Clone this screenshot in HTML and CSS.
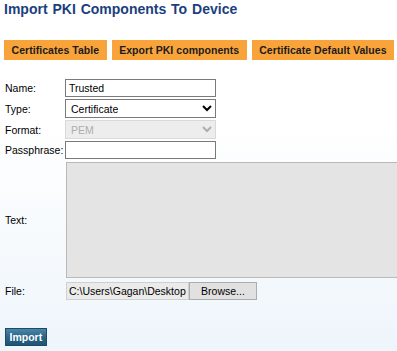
FILE: index.html
```html
<!DOCTYPE html>
<html lang="en">
<head>
    <meta charset="UTF-8">
    <title>Import PKI Components To Device</title>
    <link rel="stylesheet" href="styles.css">
</head>
<body>
    <div id="page">
        <h1 class="title">Import PKI Components To Device</h1>

        <div class="tabs">
            <a href="#" class="tab">Certificates Table</a>
            <a href="#" class="tab">Export PKI components</a>
            <a href="#" class="tab">Certificate Default Values</a>
        </div>

        <form class="pki-form">
            <label for="name">Name:</label>
            <input type="text" id="name" class="field" value="Trusted">

            <label for="type">Type:</label>
            <select id="type" class="field">
                <option>Certificate</option>
            </select>

            <label for="format">Format:</label>
            <select id="format" class="field" disabled>
                <option>PEM</option>
            </select>

            <label for="pass">Passphrase:</label>
            <input type="text" id="pass" class="field">

            <label for="text">Text:</label>
            <textarea id="text" class="text-area" disabled></textarea>

            <label for="file">File:</label>
            <div class="file-row">
                <span class="file-path">C:\Users\Gagan\Desktop</span>
                <button type="button" class="browse">Browse...</button>
            </div>
        </form>

        <button class="import-btn">Import</button>
    </div>
</body>
</html>
```

FILE: styles.css
```css
html, body {
    margin: 0;
    padding: 0;
}

body {
    font-family: "Liberation Sans", Arial, sans-serif;
    font-size: 10.5px;
    color: #000;
    background: linear-gradient(to bottom, #ffffff 0%, #ffffff 35%, #eef5fb 100%);
    min-height: 351px;
    overflow: hidden;
}

#page {
    padding: 0 0 0 4px;
}

.title {
    margin: 0;
    padding-top: 1px;
    font-size: 14px;
    font-weight: bold;
    color: #1b3f7d;
    height: 39px;
    word-spacing: 1px;
}

.tabs {
    display: flex;
    gap: 5px;
}

.tab {
    display: block;
    white-space: nowrap;
    background-color: #f9a43a;
    color: #1b1b1b;
    font-size: 10.5px;
    font-weight: bold;
    text-decoration: none;
    padding: 0 7.5px;
    line-height: 20px;
    height: 20px;
    letter-spacing: 0.05px;
}

.pki-form {
    display: grid;
    grid-template-columns: 61px auto;
    row-gap: 2px;
    align-items: center;
    margin-top: 19px;
}

.pki-form label {
    padding-left: 1px;
}

.field {
    box-sizing: border-box;
    width: 151px;
    height: 18px;
    margin: 0;
    font-family: "Liberation Sans", Arial, sans-serif;
    font-size: 10.5px;
    border: 1px solid #7a7a7a;
    background: #fff;
    padding: 0 3px;
}

select.field {
    height: 19px;
    padding: 0 1px;
}

select.field:disabled {
    background: #e6e6e6;
    color: #8c8c8c;
    border-color: #cacaca;
}

.text-area {
    box-sizing: border-box;
    width: 340px;
    height: 116px;
    margin: 1px 0 1px 1px;
    resize: none;
    border: 1px solid #b9b9b9;
    background: #e4e4e4;
}

.file-row {
    display: flex;
    margin: 1px 0 0 1px;
    height: 18px;
}

.file-path {
    box-sizing: border-box;
    width: 123px;
    height: 18px;
    line-height: 16px;
    border: 1px solid #cfcfcf;
    background: #ebebeb;
    padding-left: 2px;
    overflow: hidden;
    white-space: nowrap;
}

.browse {
    box-sizing: border-box;
    width: 68px;
    height: 18px;
    margin: 0;
    padding: 0;
    font-family: "Liberation Sans", Arial, sans-serif;
    font-size: 10.5px;
    border: 1px solid #adadad;
    background: #e1e1e1;
    color: #000;
}

.import-btn {
    display: block;
    margin: 28px 0 0 1px;
    height: 18px;
    padding: 0 3.5px;
    border: 1px solid #1d4a66;
    background: linear-gradient(to bottom, #4a86a8 0%, #2c6488 50%, #1f5475 100%);
    color: #fff;
    font-family: "Liberation Sans", Arial, sans-serif;
    font-size: 10.5px;
    font-weight: bold;
}
```
